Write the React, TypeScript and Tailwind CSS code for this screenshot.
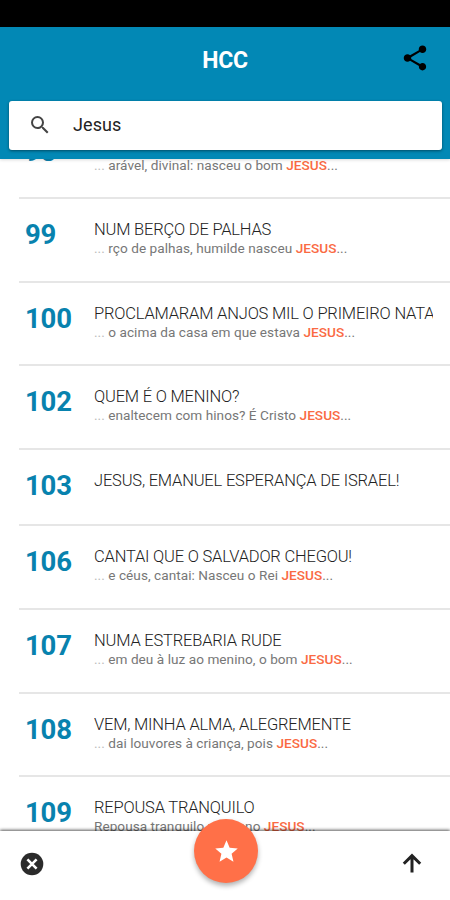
import { MdSearch, MdShare, MdStar } from "react-icons/md";

type Hymn = {
  number: number;
  title: string;
  snippet?: string;
  dots?: boolean;
};

const hymns: Hymn[] = [
  { number: 98, title: "SURGE A ALVA", snippet: "arável, divinal: nasceu o bom", dots: true },
  { number: 99, title: "NUM BERÇO DE PALHAS", snippet: "rço de palhas, humilde nasceu", dots: true },
  { number: 100, title: "PROCLAMARAM ANJOS MIL O PRIMEIRO NATAL", snippet: "o acima da casa em que estava", dots: true },
  { number: 102, title: "QUEM É O MENINO?", snippet: "enaltecem com hinos? É Cristo", dots: true },
  { number: 103, title: "JESUS, EMANUEL ESPERANÇA DE ISRAEL!" },
  { number: 106, title: "CANTAI QUE O SALVADOR CHEGOU!", snippet: "e céus, cantai: Nasceu o Rei", dots: true },
  { number: 107, title: "NUMA ESTREBARIA RUDE", snippet: "em deu à luz ao menino, o bom", dots: true },
  { number: 108, title: "VEM, MINHA ALMA, ALEGREMENTE", snippet: "dai louvores à criança, pois", dots: true },
  { number: 109, title: "REPOUSA TRANQUILO", snippet: "Repousa tranquilo pequeno" },
];

function HymnRow({ hymn }: { hymn: Hymn }) {
  return (
    <li
      className={`ml-[19px] flex shrink-0 border-b-2 border-[#e6e6e6] pl-[6px] ${
        hymn.snippet ? "h-[83.6px]" : "h-[76.6px]"
      }`}
    >
      <span className="w-[69px] shrink-0 pt-[19px] text-[27.5px] leading-[34px] font-bold tracking-[-0.2px] text-[#0882ae]">
        {hymn.number}
      </span>
      <div className="mr-[17px] min-w-0 flex-1 overflow-hidden pt-[21px] whitespace-nowrap">
        <p className="text-[16.5px] leading-[20px] font-light tracking-[-0.2px] text-[#222]">{hymn.title}</p>
        {hymn.snippet && (
          <p className="text-[13.6px] leading-[16px] tracking-[0.04px] text-[#777]">
            {hymn.dots && <span className="text-[#bbb]">... </span>}
            {hymn.snippet} <span className="font-medium text-[#fa6a43]">JESUS</span>...
          </p>
        )}
      </div>
    </li>
  );
}

export default function App() {
  return (
    <div className="flex h-[900px] w-[450px] flex-col overflow-hidden bg-white font-['Roboto',sans-serif]">
      {/* Status bar */}
      <div className="h-[27px] shrink-0 bg-black" />

      {/* Header */}
      <header className="relative z-10 h-[132px] shrink-0 bg-[#0288b5] shadow-[0_1px_3px_rgba(0,0,0,0.15)]">
        <div className="grid h-[74px] grid-cols-[1fr_auto_1fr] items-center">
          <h1 className="col-start-2 -mt-[7px] text-[23px] leading-none font-bold tracking-[-0.3px] text-white">HCC</h1>
          <button className="mr-[20px] -mt-[13px] justify-self-end" aria-label="Compartilhar">
            <MdShare className="size-[30px] text-black" />
          </button>
        </div>
        <div className="mr-[8px] ml-[9px] flex h-[49px] items-center rounded-[3px] bg-white shadow-[0_1px_3px_rgba(0,0,0,0.45)]">
          <MdSearch className="ml-[19px] -mt-[1px] size-[24px] text-[#444]" />
          <span className="-mt-[2px] ml-[21px] text-[18px] tracking-[0.1px] text-[#222]">Jesus</span>
        </div>
      </header>

      {/* Results */}
      <ul className="-mt-[43.5px] flex min-h-0 flex-1 flex-col overflow-hidden">
        {hymns.map((hymn) => (
          <HymnRow key={hymn.number} hymn={hymn} />
        ))}
      </ul>

      {/* Bottom bar */}
      <footer className="relative z-10 flex h-[69px] shrink-0 items-center justify-between bg-white px-[20px] shadow-[0_-1px_3px_rgba(0,0,0,0.65)]">
        <button aria-label="Fechar">
          <svg viewBox="0 0 24 24" className="-mt-[3px] size-[24px]">
            <circle cx="12" cy="12" r="11.3" fill="#2b2b2b" />
            <path d="M7.4 7.4l9.2 9.2M16.6 7.4l-9.2 9.2" stroke="#fff" strokeWidth="2.6" />
          </svg>
        </button>
        <button className="absolute top-[-12px] left-[194px] flex size-[64px] items-center justify-center rounded-full bg-[#ff7048] shadow-[0_3px_5px_rgba(0,0,0,0.3)]" aria-label="Favoritos">
          <MdStar className="size-[27px] text-white" />
        </button>
        <button className="mr-[8px]" aria-label="Voltar ao topo">
          <svg viewBox="0 0 20 20" className="-mt-[6px] size-[20px]" fill="none" stroke="#222" strokeWidth="3">
            <path d="M10 19.5V2.5M1.8 10.8L10 2.6l8.2 8.2" />
          </svg>
        </button>
      </footer>
    </div>
  );
}
